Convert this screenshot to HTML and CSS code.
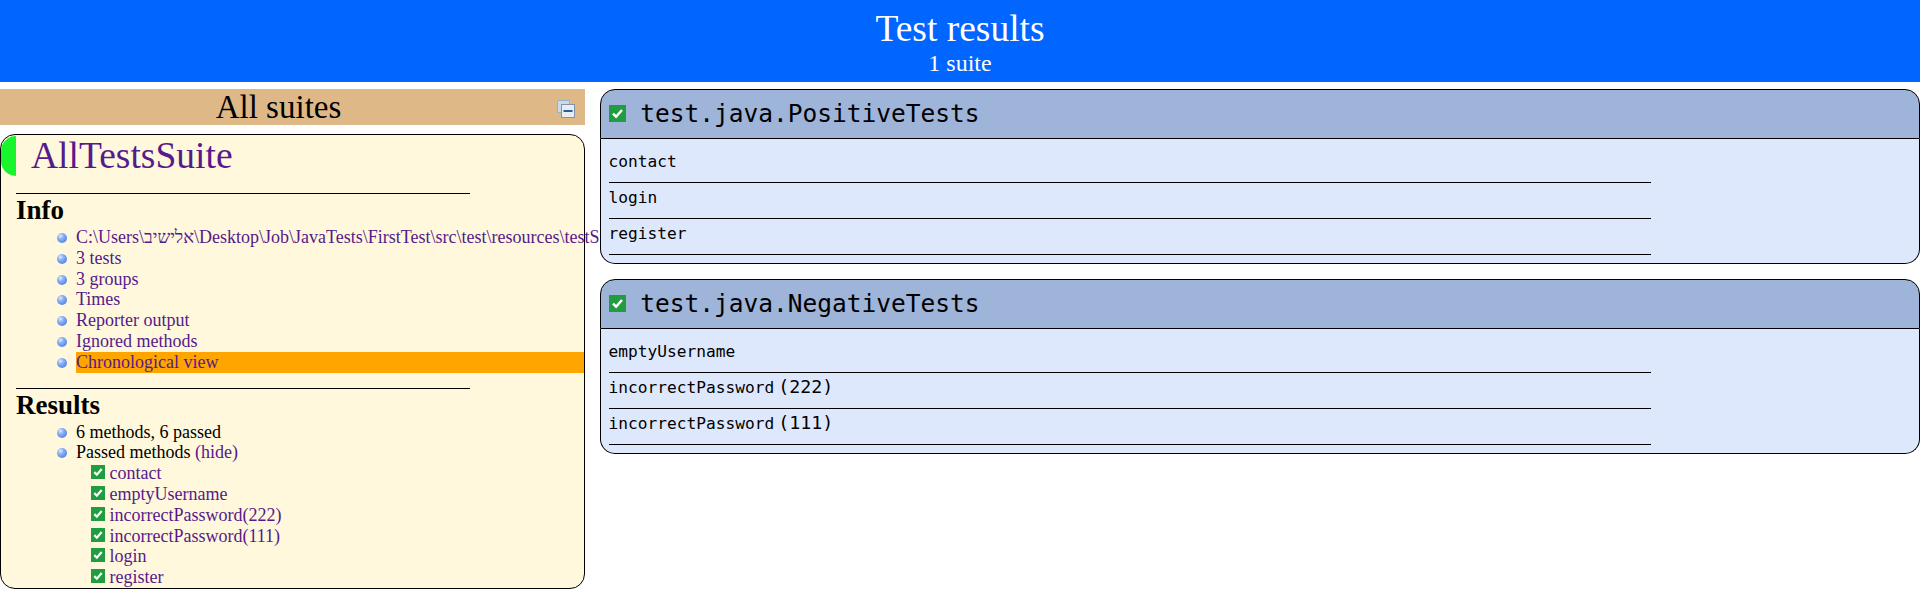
FILE: index.html
```html
<!DOCTYPE html>
<html lang="en">
<head>
<meta charset="utf-8">
<title>TestNG reports</title>
<link rel="stylesheet" href="styles.css">
</head>
<body>
<header class="banner">
  <div class="banner-title">Test results</div>
  <div class="banner-sub">1 suite</div>
</header>
<div class="main">
  <nav class="navigator">
    <div class="nav-header">
      <a class="collapse-all" href="#" title="Collapse/expand all the suites">
        <svg width="18" height="18" viewBox="0 0 18 18">
          <rect x="0.5" y="0.5" width="12" height="12" fill="#c9d9ea" stroke="#9db0c6"/>
          <rect x="4.5" y="4.5" width="13" height="13" fill="#e6edf5" stroke="#7f95ae"/>
          <rect x="6.5" y="10" width="9" height="2" fill="#2d5e90"/>
        </svg>
      </a>
      <span>All suites</span>
    </div>
    <div class="suite">
      <div class="suite-header"><a class="suite-name" href="#">AllTestsSuite</a></div>
      <div class="suite-content">
        <div class="section-title">Info</div>
        <ul class="section-list">
          <li class="nowrap"><a href="#">C:\Users\אלישיב\Desktop\Job\JavaTests\FirstTest\src\test\resources\testSuites\AllTests.xml</a></li>
          <li><a href="#">3 tests</a></li>
          <li><a href="#">3 groups</a></li>
          <li><a href="#">Times</a></li>
          <li><a href="#">Reporter output</a></li>
          <li><a href="#">Ignored methods</a></li>
          <li class="selected"><a href="#">Chronological view</a></li>
        </ul>
        <div class="section-title">Results</div>
        <ul class="section-list">
          <li>6 methods, 6 passed</li>
          <li>Passed methods <a href="#">(hide)</a>
            <div class="method-list">
              <div><svg class="check-sm" viewBox="0 0 11 11"><rect width="11" height="11" fill="#1f9d40"/><path d="M2.6 5.6 L4.6 7.6 L8.4 3.2" stroke="#fff" stroke-width="1.7" fill="none"/></svg> <a href="#">contact</a></div>
              <div><svg class="check-sm" viewBox="0 0 11 11"><rect width="11" height="11" fill="#1f9d40"/><path d="M2.6 5.6 L4.6 7.6 L8.4 3.2" stroke="#fff" stroke-width="1.7" fill="none"/></svg> <a href="#">emptyUsername</a></div>
              <div><svg class="check-sm" viewBox="0 0 11 11"><rect width="11" height="11" fill="#1f9d40"/><path d="M2.6 5.6 L4.6 7.6 L8.4 3.2" stroke="#fff" stroke-width="1.7" fill="none"/></svg> <a href="#">incorrectPassword(222)</a></div>
              <div><svg class="check-sm" viewBox="0 0 11 11"><rect width="11" height="11" fill="#1f9d40"/><path d="M2.6 5.6 L4.6 7.6 L8.4 3.2" stroke="#fff" stroke-width="1.7" fill="none"/></svg> <a href="#">incorrectPassword(111)</a></div>
              <div><svg class="check-sm" viewBox="0 0 11 11"><rect width="11" height="11" fill="#1f9d40"/><path d="M2.6 5.6 L4.6 7.6 L8.4 3.2" stroke="#fff" stroke-width="1.7" fill="none"/></svg> <a href="#">login</a></div>
              <div><svg class="check-sm" viewBox="0 0 11 11"><rect width="11" height="11" fill="#1f9d40"/><path d="M2.6 5.6 L4.6 7.6 L8.4 3.2" stroke="#fff" stroke-width="1.7" fill="none"/></svg> <a href="#">register</a></div>
            </div>
          </li>
        </ul>
      </div>
    </div>
  </nav>
  <main class="content">
    <section class="class-panel">
      <div class="panel-header"><svg class="check-lg" viewBox="0 0 11 11"><rect width="11" height="11" fill="#1f9d40"/><path d="M2.6 5.6 L4.6 7.6 L8.4 3.2" stroke="#fff" stroke-width="1.6" fill="none"/></svg> <span class="class-name">test.java.PositiveTests</span></div>
      <div class="panel-body">
        <div class="method-row"><span class="method-name">contact</span></div>
        <div class="method-row"><span class="method-name">login</span></div>
        <div class="method-row"><span class="method-name">register</span></div>
      </div>
    </section>
    <section class="class-panel">
      <div class="panel-header"><svg class="check-lg" viewBox="0 0 11 11"><rect width="11" height="11" fill="#1f9d40"/><path d="M2.6 5.6 L4.6 7.6 L8.4 3.2" stroke="#fff" stroke-width="1.6" fill="none"/></svg> <span class="class-name">test.java.NegativeTests</span></div>
      <div class="panel-body">
        <div class="method-row"><span class="method-name">emptyUsername</span></div>
        <div class="method-row"><span class="method-name">incorrectPassword</span><span class="params">(222)</span></div>
        <div class="method-row"><span class="method-name">incorrectPassword</span><span class="params">(111)</span></div>
      </div>
    </section>
  </main>
</div>
</body>
</html>
```
FILE: styles.css
```css
html, body {
  background: #ffffff;
}

body {
  margin: 0;
  font-family: "Liberation Serif", "DejaVu Serif", serif;
  color: #000;
}

a {
  color: #551a8b;
  text-decoration: none;
}

/* ---------- top banner ---------- */
.banner {
  height: 82px;
  box-sizing: border-box;
  padding-top: 7.5px;
  background: #0066ff;
  color: #fff;
  text-align: center;
}

.banner-title {
  font-size: 37.5px;
  line-height: 42px;
}

.banner-sub {
  font-size: 24px;
  line-height: 27px;
}

/* ---------- layout ---------- */
.main {
  display: flex;
  align-items: flex-start;
  margin-top: 7px;
}

.navigator {
  flex: 0 0 600px;
  width: 600px;
  overflow: hidden;
}

.content {
  flex: 1 1 auto;
  min-width: 0;
}

/* ---------- navigator ---------- */
.nav-header {
  margin: 0 15px 9px 0;
  height: 36px;
  line-height: 36px;
  background: #deb887;
  text-align: center;
  font-size: 33px;
}

.collapse-all {
  float: right;
  display: block;
  margin: 11px 10px 0 0;
  line-height: 0;
}

.collapse-all svg {
  display: block;
}

.suite {
  margin-right: 15px;
  background: #fff8dc;
  border: 1px solid #000;
  border-radius: 15px;
}

.suite-header {
  height: 43px;
  box-sizing: border-box;
  padding-top: 1px;
}

.suite-name {
  display: inline-block;
  vertical-align: top;
  height: 40px;
  line-height: 40px;
  font-size: 37.5px;
  border-left: 15px solid #19f52d;
  border-radius: 15px 0 0 15px;
  padding-left: 15px;
}

.suite-content {
  margin-left: 15px;
}

.section-title {
  margin-top: 15px;
  width: 80%;
  border-top: 1px solid #000;
  padding: 1px 0 1px;
  font-size: 27px;
  font-weight: bold;
  line-height: 31px;
}

.section-list {
  margin: 0;
  padding-left: 60px;
  list-style: none;
}

.section-list li {
  font-size: 18px;
  line-height: 20.8px;
}

.section-list > li::before {
  content: "";
  display: inline-block;
  width: 10px;
  height: 10px;
  border-radius: 50%;
  margin-left: -19px;
  margin-right: 9px;
  background: radial-gradient(circle at 35% 30%, #e4eeff 0, #8db2f6 30%, #3a6fdc 100%);
}

.section-list li.selected {
  background: #ffa500;
}

.section-list li.nowrap {
  white-space: nowrap;
}

.method-list {
  margin-left: 15px;
}

.check-sm {
  width: 14px;
  height: 14px;
  vertical-align: baseline;
}

/* ---------- main panels ---------- */
.class-panel {
  margin-bottom: 15px;
}

.panel-header {
  border: 1px solid #000;
  border-radius: 15px 15px 0 0;
  background: #9fb4d9;
  padding: 7px 7.5px 8px;
  line-height: 33px;
  font-family: "DejaVu Sans Mono", monospace;
  font-size: 24.5px;
  color: #000;
}

.check-lg {
  width: 17px;
  height: 17px;
  vertical-align: baseline;
}

.panel-body {
  border: 1px solid #000;
  border-top: 0;
  border-radius: 0 0 15px 15px;
  background: #dee8fc;
  padding: 8px 7.5px;
}

.method-row {
  width: 80%;
  padding: 4px 0 9px;
  line-height: 22px;
  border-bottom: 1px solid #000;
  font-family: "DejaVu Sans Mono", monospace;
  font-size: 16.2px;
}

.method-name {
  font-size: 16.2px;
}

.params {
  font-size: 18.3px;
  line-height: 1;
  margin-left: 4px;
}
```
